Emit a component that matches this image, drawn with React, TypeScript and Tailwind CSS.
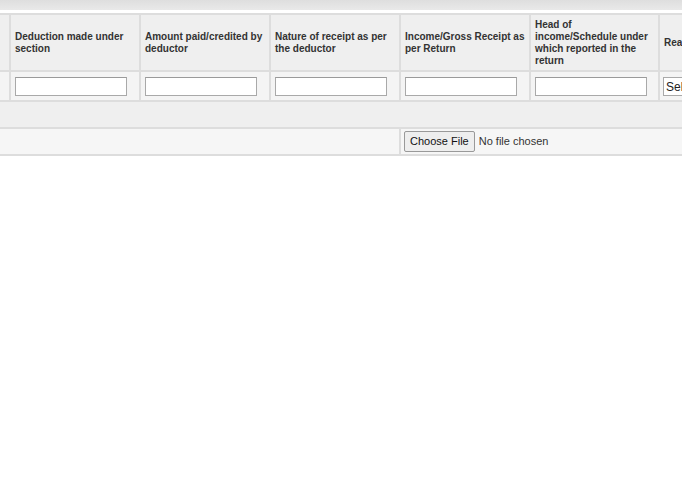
const columns = [
  'Deduction made under section',
  'Amount paid/credited by deductor',
  'Nature of receipt as per the deductor',
  'Income/Gross Receipt as per Return',
  'Head of income/Schedule under which reported in the return',
]

export default function App() {
  return (
    <div className="w-[682px] h-[487px] overflow-hidden bg-white font-['Liberation_Sans',Arial,sans-serif]">
      <div className="h-[10px] bg-gradient-to-b from-[#dedede] to-[#e9e9e9]" />
      <div className="h-[3px] bg-white" />
      <div className="w-[900px] bg-[#dddddd] flex flex-col gap-[2px] py-[2px]">
        {/* header row */}
        <div className="grid grid-cols-[9px_128px_128px_128px_128px_127px_238px] gap-x-[2px]">
          <div className="h-[55px] bg-[#efefef]" />
          {columns.map((c) => (
            <div
              key={c}
              className="h-[55px] bg-[#efefef] pl-[4px] pr-[3px] flex items-center text-[10px] leading-[12px] font-bold text-[#333]"
            >
              <span className="block">{c}</span>
            </div>
          ))}
          <div className="h-[55px] bg-[#efefef] px-[4px] flex items-center text-[10px] leading-[12px] font-bold text-[#333]">
            Reason for difference
          </div>
        </div>

        {/* input row */}
        <div className="grid grid-cols-[9px_128px_128px_128px_128px_127px_238px] gap-x-[2px]">
          <div className="h-[28px] bg-[#f4f4f4]" />
          {columns.map((c) => (
            <div key={c} className="h-[28px] bg-[#f4f4f4] px-[4px] flex items-center">
              <input
                type="text"
                className="w-[112px] h-[19px] bg-white border border-[#a9a9a9] border-t-[#9a9a9a] text-[11px] px-1 outline-none"
              />
            </div>
          ))}
          <div className="h-[28px] bg-[#f4f4f4] px-[3px] flex items-center">
            <select className="h-[19px] bg-white border border-[#a9a9a9] text-[12px] text-[#222] pl-[2px] pr-6 appearance-none">
              <option>Select</option>
            </select>
          </div>
        </div>

        {/* empty gray row */}
        <div className="h-[25px] bg-[#efefef]" />

        {/* file row */}
        <div className="flex gap-x-[2px]">
          <div className="w-[399px] h-[25px] bg-[#f6f6f6]" />
          <div className="flex-1 h-[25px] bg-[#f6f6f6] px-[3px] flex items-center">
            <input type="file" className="text-[11px] text-[#333] file:mr-[4px] file:px-[5px] file:py-[1px] file:text-[11px] file:text-[#111] file:bg-[#eeeeee] file:border file:border-[#999] file:rounded-[2px]" />
          </div>
        </div>
      </div>
    </div>
  )
}
